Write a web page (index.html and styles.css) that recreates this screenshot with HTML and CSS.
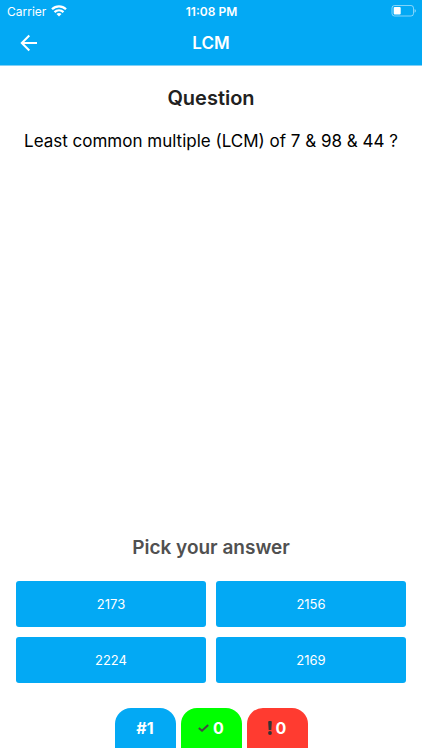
FILE: index.html
```html
<!DOCTYPE html>
<html lang="en">
<head>
<meta charset="utf-8">
<meta name="viewport" content="width=device-width, initial-scale=1">
<title>LCM</title>
<link rel="stylesheet" href="styles.css">
</head>
<body>
<div class="app">
  <header class="header">
    <div class="status">
      <div class="carrier">
        <span>Carrier</span>
        <svg width="16" height="12" viewBox="0 0 16 12" aria-hidden="true">
          <g fill="none" stroke="currentColor" stroke-width="2.3">
            <path d="M1 4.3C5 .4 11 .4 15 4.3"/>
            <path d="M3.5 7.1C6.1 4.7 9.9 4.7 12.5 7.1"/>
          </g>
          <path d="M5.5 9C7 7.7 9 7.7 10.5 9L8 11.6Z" fill="currentColor"/>
        </svg>
      </div>
      <span class="time">11:08 PM</span>
      <svg class="battery" width="25" height="12" viewBox="0 0 25 12" aria-hidden="true">
        <rect x="1" y=".5" width="21.5" height="10.5" rx="2.5" fill="none" stroke="currentColor" opacity=".5"/>
        <rect x="2.7" y="2" width="7" height="7.5" rx="1" fill="currentColor"/>
        <path d="M23.6 4V7.7Q24.8 7.2 24.8 5.85T23.6 4Z" fill="currentColor" opacity=".6"/>
      </svg>
    </div>
    <nav class="navbar">
      <button class="back" type="button" aria-label="Back">
        <svg width="18" height="18" viewBox="0 0 18 18" fill="none" stroke="currentColor" stroke-width="2" aria-hidden="true">
          <path d="M17 9H2M9.3 1.5L1.8 9L9.3 16.5"/>
        </svg>
      </button>
      <h1 class="title">LCM</h1>
    </nav>
  </header>
  <main class="content">
    <section class="question">
      <h2 class="heading">Question</h2>
      <p class="prompt">Least common multiple (LCM) of 7 &amp; 98 &amp; 44 ?</p>
    </section>
    <section class="picker">
      <h2 class="heading muted">Pick your answer</h2>
      <div class="answers">
        <button class="answer" type="button">2173</button>
        <button class="answer" type="button">2156</button>
        <button class="answer" type="button">2224</button>
        <button class="answer" type="button">2169</button>
      </div>
    </section>
  </main>
  <footer class="scores">
    <div class="score number">#1</div>
    <div class="score correct">
      <svg width="11" height="8" viewBox="0 0 11 8" fill="none" stroke="#444" stroke-width="2" aria-hidden="true"><path d="M.8 4L4 6.7L10.2 1"/></svg>
      <span>0</span>
    </div>
    <div class="score wrong">
      <svg width="4" height="14" viewBox="0 0 4 14" fill="#333" aria-hidden="true"><path d="M.2 1Q.2 0 1.2 0H2.8Q3.8 0 3.8 1L3.3 9H.7Z"/><circle cx="2" cy="12" r="1.9"/></svg>
      <span>0</span>
    </div>
  </footer>
</div>
</body>
</html>
```
FILE: styles.css
```css
* {
  box-sizing: border-box;
}

body {
  margin: 0;
  background: #fff;
  color: #000;
  font-family: Inter, "Liberation Sans", sans-serif;
}

h1,
h2,
p {
  margin: 0;
}

button {
  border: 0;
  font-family: inherit;
  cursor: pointer;
}

.app {
  display: flex;
  flex-direction: column;
  min-height: 100vh;
  padding-bottom: 2px;
}

.header {
  padding-bottom: 2px;
  background: #03a9f4;
  color: #fff;
  border-bottom: 1px solid #81d0f5;
}

.status {
  display: grid;
  grid-template-columns: 1fr auto 1fr;
  align-items: center;
  height: 22px;
  padding: 0 6px 0 7px;
  font-size: 12px;
}

.carrier {
  display: flex;
  align-items: center;
  gap: 5px;
}

.time {
  font-weight: 600;
}

.battery {
  justify-self: end;
}

.navbar {
  display: grid;
  grid-template-columns: 1fr auto 1fr;
  align-items: center;
  height: 41px;
  padding: 0 16px;
}

.back {
  display: flex;
  justify-self: start;
  padding: 4px;
  background: none;
  color: inherit;
}

.title {
  font-size: 17px;
  font-weight: 600;
}

.content {
  display: flex;
  flex: 1;
  flex-direction: column;
  justify-content: space-between;
  padding: 20px 16px 25px;
  text-align: center;
}

.heading {
  color: #212121;
  font-size: 20px;
  font-weight: 600;
  line-height: 24px;
}

.muted {
  color: #505050;
  font-size: 19px;
}

.prompt {
  margin-top: 19px;
  font-size: 17px;
  line-height: 24px;
}

.answers {
  display: grid;
  grid-template-columns: 1fr 1fr;
  gap: 10px;
  margin-top: 21px;
}

.answer {
  height: 46px;
  border-radius: 3px;
  background: #03a9f4;
  color: #fff;
  font-size: 13px;
}

.scores {
  display: flex;
  justify-content: center;
  gap: 5px;
}

.score {
  display: flex;
  align-items: center;
  justify-content: center;
  gap: 4px;
  width: 61px;
  height: 40px;
  border-radius: 16px 16px 0 0;
  color: #fff;
  font-size: 16px;
  font-weight: 700;
}

.number {
  background: #03a9f4;
}

.correct {
  background: #0f0;
}

.wrong {
  background: #ff3b30;
}
```
